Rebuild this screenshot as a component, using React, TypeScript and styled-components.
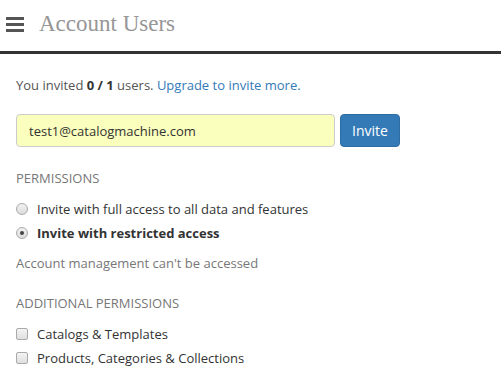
import React from "react";
import styled, { createGlobalStyle } from "styled-components";

const GlobalStyle = createGlobalStyle`
  html, body {
    margin: 0;
    padding: 0;
    background: #fff;
  }
  body {
    font-family: "Open Sans", "Liberation Sans", sans-serif;
    font-size: 13px;
    color: #333;
  }
`;

const Header = styled.header`
  display: flex;
  align-items: center;
  height: 51px;
  padding-left: 6px;
  gap: 15px;
  border-bottom: 3px solid #333;
`;

const MenuButton = styled.span`
  display: flex;
  flex-direction: column;
  gap: 3px;
  width: 18px;
  margin-top: -3px;

  & > i {
    display: block;
    height: 3px;
    background: #555;
  }
`;

const Title = styled.h1`
  margin: 0;
  margin-top: -4px;
  font-family: "Liberation Serif", "DejaVu Serif", serif;
  font-weight: normal;
  font-size: 23px;
  color: #969696;
`;

const Body = styled.main`
  padding: 21px 16px 0;
`;

const Notice = styled.p`
  margin: 0 0 19px;
  line-height: 20px;
  color: #555;

  b {
    color: #333;
  }
  a {
    color: #337ab7;
    text-decoration: none;
  }
`;

const InviteRow = styled.form`
  display: flex;
  gap: 5px;
  align-items: stretch;
`;

const EmailInput = styled.input`
  width: 319px;
  height: 33px;
  box-sizing: border-box;
  padding: 0 12px;
  font: inherit;
  color: #333;
  background: #faffbd;
  border: 1px solid #ccc;
  border-radius: 4px;
  outline: none;
`;

const InviteButton = styled.button`
  width: 60px;
  height: 33px;
  font: inherit;
  font-size: 14px;
  color: #fff;
  background: #337ab7;
  border: 1px solid #2e6da4;
  border-radius: 4px;
`;

const SectionLabel = styled.div<{ $top: number }>`
  margin: ${(p) => p.$top}px 0 9px;
  line-height: 20px;
  color: #777;
  text-transform: uppercase;
`;

const OptionRow = styled.label<{ $bold?: boolean }>`
  display: flex;
  align-items: center;
  gap: 9px;
  height: 24px;
  color: #333;
  font-weight: ${(p) => (p.$bold ? 700 : 400)};
`;

const Radio = styled.span<{ $checked?: boolean }>`
  width: 10px;
  height: 10px;
  border-radius: 50%;
  border: 1px solid #aaa;
  background: linear-gradient(#f2f2f2, #dcdcdc);
  display: flex;
  align-items: center;
  justify-content: center;

  &::after {
    content: "";
    width: 4px;
    height: 4px;
    border-radius: 50%;
    background: ${(p) => (p.$checked ? "#444" : "transparent")};
  }
`;

const Checkbox = styled.span`
  width: 10px;
  height: 10px;
  border-radius: 2px;
  border: 1px solid #aaa;
  background: linear-gradient(#f4f4f4, #dedede);
`;

const Hint = styled.p`
  margin: 8px 0 0;
  line-height: 20px;
  color: #777;
`;

export default function App() {
  return (
    <>
      <GlobalStyle />
      <Header>
        <MenuButton>
          <i />
          <i />
          <i />
        </MenuButton>
        <Title>Account Users</Title>
      </Header>
      <Body>
        <Notice>
          You invited <b>0 / 1</b> users. <a href="#">Upgrade to invite more.</a>
        </Notice>
        <InviteRow onSubmit={(e) => e.preventDefault()}>
          <EmailInput defaultValue="test1@catalogmachine.com" />
          <InviteButton type="submit">Invite</InviteButton>
        </InviteRow>

        <SectionLabel $top={21}>Permissions</SectionLabel>
        <OptionRow>
          <Radio />
          Invite with full access to all data and features
        </OptionRow>
        <OptionRow $bold>
          <Radio $checked />
          Invite with restricted access
        </OptionRow>
        <Hint>Account management can't be accessed</Hint>

        <SectionLabel $top={20}>Additional Permissions</SectionLabel>
        <OptionRow>
          <Checkbox />
          Catalogs &amp; Templates
        </OptionRow>
        <OptionRow>
          <Checkbox />
          Products, Categories &amp; Collections
        </OptionRow>
      </Body>
    </>
  );
}
